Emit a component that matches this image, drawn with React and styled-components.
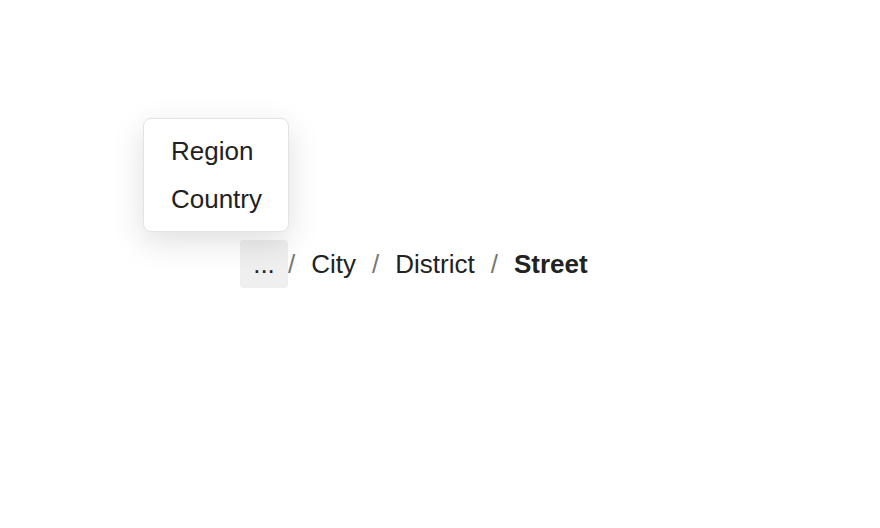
import styled, { createGlobalStyle } from 'styled-components'

const GlobalStyle = createGlobalStyle`
  body {
    margin: 0;
    background: #ffffff;
    font-family: "Liberation Sans", Arial, sans-serif;
  }
`

const Page = styled.div`
  padding: 240px 0 0 240px;
`

const Trail = styled.nav`
  display: flex;
  align-items: center;
  font-size: 26px;
  color: #222222;
  height: 48px;
`

const MoreWrap = styled.div`
  position: relative;
`

const MoreButton = styled.button`
  width: 48px;
  height: 48px;
  border: none;
  border-radius: 4px;
  background: #efefef;
  color: #222222;
  font-family: inherit;
  font-size: 26px;
  padding: 0;
  cursor: pointer;
`

const Menu = styled.ul`
  position: absolute;
  right: -1px;
  bottom: calc(100% + 8px);
  margin: 0;
  padding: 8px 0;
  list-style: none;
  background: #ffffff;
  border: 1px solid #e3e3e3;
  border-radius: 8px;
  box-shadow: 0 10px 32px rgba(0, 0, 0, 0.13);
  white-space: nowrap;
`

const MenuItem = styled.li`
  height: 48px;
  line-height: 48px;
  padding: 0 26px 0 27px;
  font-size: 26px;
  color: #222222;
  cursor: pointer;
`

const Sep = styled.span`
  color: #777777;
  margin: ${({ $tight }) => ($tight ? '0 16px 0 0' : '0 16px')};
`

const Crumb = styled.a`
  color: #222222;
  text-decoration: none;
  font-weight: ${({ $current }) => ($current ? 700 : 400)};
`

const App = () => {
  const hidden = ['Region', 'Country']
  const shown = ['City', 'District', 'Street']

  return (
    <>
      <GlobalStyle />
      <Page>
        <Trail>
          <MoreWrap>
            <MoreButton>...</MoreButton>
            <Menu>
              {hidden.map((name) => (
                <MenuItem key={name}>{name}</MenuItem>
              ))}
            </Menu>
          </MoreWrap>
          {shown.map((name, i) => (
            <span key={name}>
              <Sep $tight={i === 0}>/</Sep>
              <Crumb $current={i === shown.length - 1}>{name}</Crumb>
            </span>
          ))}
        </Trail>
      </Page>
    </>
  )
}

export default App
